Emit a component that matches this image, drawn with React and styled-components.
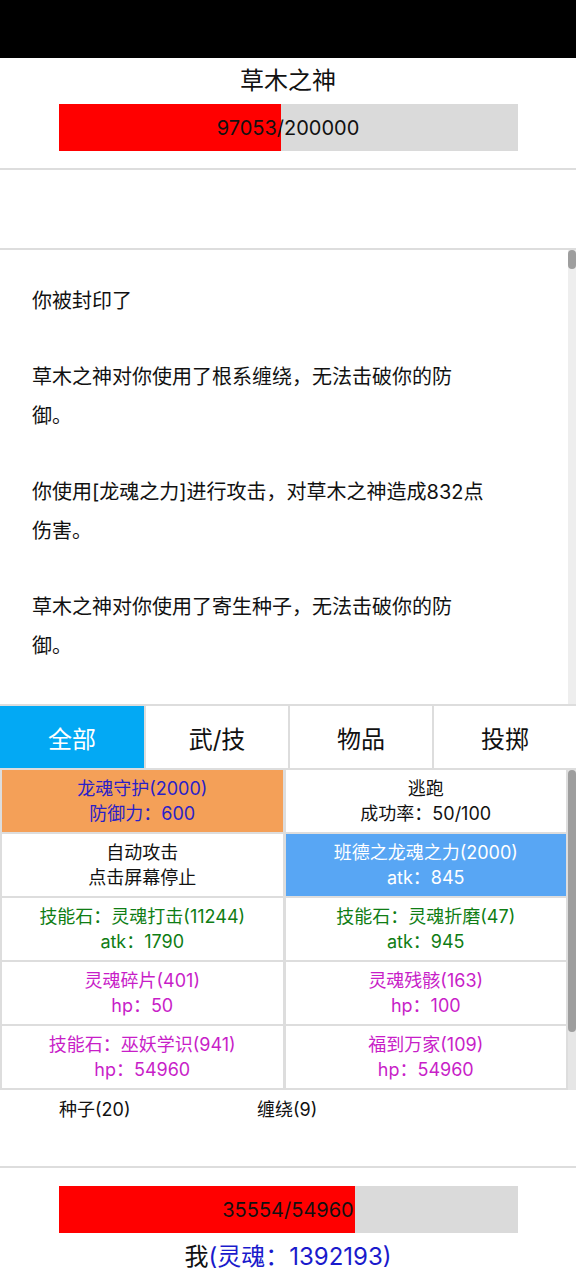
import React from "react";
import styled, { createGlobalStyle } from "styled-components";

const GlobalStyle = createGlobalStyle`
  html, body {
    margin: 0;
    padding: 0;
    background: #fff;
  }
  body {
    font-family: "Inter", "Noto Sans CJK SC", sans-serif;
    color: #111;
  }
  * {
    box-sizing: border-box;
  }
`;

const Page = styled.div`
  width: 576px;
  height: 1280px;
  display: flex;
  flex-direction: column;
  overflow: hidden;
`;

const StatusBar = styled.div`
  height: 58px;
  background: #000;
  flex-shrink: 0;
`;

const FighterPanel = styled.div`
  display: flex;
  flex-direction: column;
  align-items: center;
  padding: ${(p) => p.$pad};
  flex-shrink: 0;
`;

const Name = styled.div`
  font-size: 24px;
  line-height: 46px;
  height: 46px;
`;

const HpBar = styled.div`
  position: relative;
  width: 459px;
  height: 47px;
  background: #dadada;
  display: flex;
  align-items: center;
  justify-content: center;
`;

const HpFill = styled.div`
  position: absolute;
  left: 0;
  top: 0;
  bottom: 0;
  background: #ff0000;
`;

const HpText = styled.span`
  position: relative;
  font-size: 20px;
  color: #111;
`;

const Divider = styled.div`
  height: 2px;
  background: #dddddd;
  flex-shrink: 0;
`;

const Spacer = styled.div`
  height: ${(p) => p.$h}px;
  flex-shrink: 0;
`;

const ScrollRow = styled.div`
  display: flex;
  height: ${(p) => p.$h}px;
  flex-shrink: 0;
`;

const LogBody = styled.div`
  flex: 1;
  padding: 32px 0 0 32px;
  overflow: hidden;
`;

const LogLine = styled.p`
  margin: 0 0 37px;
  width: 456px;
  font-size: 20px;
  line-height: 39px;
`;

const Track = styled.div`
  width: 8px;
  background: ${(p) => p.$bg || "#eeeeee"};
  display: flex;
  flex-direction: column;
  flex-shrink: 0;
`;

const Thumb = styled.div`
  height: ${(p) => p.$h}px;
  background: #9e9e9e;
  border-radius: 4px;
`;

const Tabs = styled.div`
  display: grid;
  grid-template-columns: repeat(4, 1fr);
  height: 64px;
  border-top: 2px solid #dddddd;
  flex-shrink: 0;
`;

const Tab = styled.div`
  display: flex;
  align-items: center;
  justify-content: center;
  font-size: 24px;
  background: ${(p) => (p.$active ? "#03a9f4" : "#fff")};
  color: ${(p) => (p.$active ? "#fff" : "#111")};
  border-left: ${(p) => (p.$first ? "none" : "2px solid #dddddd")};
`;

const GridWrap = styled.div`
  display: flex;
  background: #dddddd;
  padding-top: 2px;
  height: 322px;
  flex-shrink: 0;
`;

const Grid = styled.div`
  flex: 1;
  display: grid;
  grid-template-columns: 1fr 1fr;
  grid-auto-rows: 62px;
  gap: 2px 3px;
  padding: 0 2px 0 2px;
`;

const Cell = styled.div`
  background: ${(p) => p.$bg || "#fff"};
  color: ${(p) => p.$color || "#111"};
  display: flex;
  flex-direction: column;
  align-items: center;
  justify-content: center;
  font-size: 18px;
  line-height: 25px;
`;

const Effects = styled.div`
  display: flex;
  padding: 7px 0 0 59px;
  height: 76px;
  flex-shrink: 0;
`;

const Effect = styled.span`
  min-width: 198px;
  font-size: 18px;
  line-height: 25px;
`;

const PlayerName = styled.div`
  font-size: 24px;
  line-height: 48px;
  color: #111;
`;

const Soul = styled.span`
  color: #1a1acc;
`;

const logs = [
  "你被封印了",
  "草木之神对你使用了根系缠绕，无法击破你的防御。",
  "你使用[龙魂之力]进行攻击，对草木之神造成832点伤害。",
  "草木之神对你使用了寄生种子，无法击破你的防御。",
];

const cells = [
  { a: "龙魂守护(2000)", b: "防御力：600", bg: "#f4a058", color: "#2a1fc8" },
  { a: "逃跑", b: "成功率：50/100" },
  { a: "自动攻击", b: "点击屏幕停止" },
  { a: "班德之龙魂之力(2000)", b: "atk：845", bg: "#58a6f4", color: "#fff" },
  { a: "技能石：灵魂打击(11244)", b: "atk：1790", color: "#0f7d14" },
  { a: "技能石：灵魂折磨(47)", b: "atk：945", color: "#0f7d14" },
  { a: "灵魂碎片(401)", b: "hp：50", color: "#c81ec8" },
  { a: "灵魂残骸(163)", b: "hp：100", color: "#c81ec8" },
  { a: "技能石：巫妖学识(941)", b: "hp：54960", color: "#c81ec8" },
  { a: "福到万家(109)", b: "hp：54960", color: "#c81ec8" },
];

function Bar({ hp, max }) {
  return (
    <HpBar>
      <HpFill style={{ width: `${(hp / max) * 100}%` }} />
      <HpText>
        {hp}/{max}
      </HpText>
    </HpBar>
  );
}

export default function App() {
  return (
    <Page>
      <GlobalStyle />
      <StatusBar />
      <FighterPanel $pad="0 0 17px">
        <Name>草木之神</Name>
        <Bar hp={97053} max={200000} />
      </FighterPanel>
      <Divider />
      <Spacer $h={78} />
      <Divider />
      <ScrollRow $h={454}>
        <LogBody>
          {logs.map((l, i) => (
            <LogLine key={i}>{l}</LogLine>
          ))}
        </LogBody>
        <Track>
          <Thumb $h={19} />
        </Track>
      </ScrollRow>
      <Tabs>
        {["全部", "武/技", "物品", "投掷"].map((t, i) => (
          <Tab key={t} $active={i === 0} $first={i === 0}>
            {t}
          </Tab>
        ))}
      </Tabs>
      <GridWrap>
        <Grid>
          {cells.map((c, i) => (
            <Cell key={i} $bg={c.bg} $color={c.color}>
              <span>{c.a}</span>
              <span>{c.b}</span>
            </Cell>
          ))}
        </Grid>
        <Track $bg="#e6e6e6">
          <Thumb $h={262} />
        </Track>
      </GridWrap>
      <Effects>
        <Effect>种子(20)</Effect>
        <Effect>缠绕(9)</Effect>
      </Effects>
      <Divider />
      <FighterPanel $pad="18px 0 0">
        <Bar hp={35554} max={54960} />
        <PlayerName>
          我<Soul>(灵魂：1392193)</Soul>
        </PlayerName>
      </FighterPanel>
    </Page>
  );
}
